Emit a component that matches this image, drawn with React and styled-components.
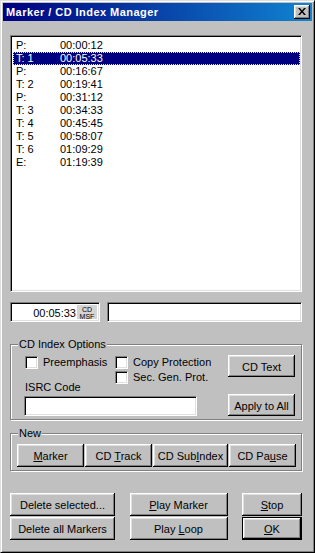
import styled, { createGlobalStyle } from "styled-components";

const GlobalStyle = createGlobalStyle`
  html, body {
    margin: 0;
    padding: 0;
    background: #c0c0c0;
  }
  body {
    font-family: "Liberation Sans", Arial, sans-serif;
    font-size: 11px;
    color: #000;
  }
  * {
    box-sizing: border-box;
  }
`;

const Window = styled.div`
  width: 315px;
  height: 553px;
  background: #c0c0c0;
  border: 1px solid;
  border-color: #dfdfdf #000 #000 #dfdfdf;
  box-shadow: inset 1px 1px #fff, inset -1px -1px #808080;
  padding: 2px;
  display: flex;
  flex-direction: column;
`;

const TitleBar = styled.div`
  height: 18px;
  flex: none;
  background: linear-gradient(to right, #000080, #1084d0);
  display: flex;
  align-items: center;
  justify-content: space-between;
  padding: 0 2px 0 3px;
`;

const Title = styled.span`
  color: #fff;
  font-weight: bold;
  font-size: 11px;
  letter-spacing: 0.45px;
`;

const CloseButton = styled.div`
  width: 16px;
  height: 14px;
  background: #c0c0c0;
  box-shadow: inset -1px -1px #000, inset 1px 1px #fff, inset -2px -2px #808080,
    inset 2px 2px #dfdfdf;
  display: flex;
  align-items: center;
  justify-content: center;
  padding-bottom: 1px;
`;

const Body = styled.div`
  flex: 1;
  display: flex;
  flex-direction: column;
  padding: 14px 10px 0 7px;
`;

const sunken = `
  border: 1px solid;
  border-color: #808080 #fff #fff #808080;
  box-shadow: inset 1px 1px #000, inset -1px -1px #dfdfdf;
`;

const ListBox = styled.div`
  ${sunken}
  height: 257px;
  background: #fff;
  padding: 3px 1px 1px 2px;
`;

const Row = styled.div`
  height: 13px;
  line-height: 11px;
  display: flex;
  padding-left: 2px;
  border: 1px solid transparent;
  background: ${(p) => (p.$selected ? "#000080" : "transparent")};
  color: ${(p) => (p.$selected ? "#fff" : "#000")};
  ${(p) => p.$selected && "border: 1px dotted #ffff00;"}
`;

const TypeCell = styled.span`
  width: 44px;
`;

const DisplayRow = styled.div`
  display: flex;
  gap: 7px;
  margin-top: 10px;
`;

const TimeBox = styled.div`
  ${sunken}
  width: 90px;
  height: 20px;
  background: #fff;
  display: flex;
  padding: 2px;
`;

const TimeText = styled.span`
  flex: 1;
  text-align: right;
  line-height: 16px;
  padding-right: 1px;
`;

const TimeFormat = styled.span`
  width: 20px;
  background: #d4d4d4;
  font-size: 7px;
  line-height: 7px;
  text-align: center;
  padding-top: 1px;
  overflow: hidden;
`;

const InfoBox = styled.div`
  ${sunken}
  flex: 1;
  height: 20px;
  background: #fff;
`;

const Group = styled.div`
  position: relative;
  border: 1px solid #808080;
  box-shadow: 1px 1px 0 #fff, inset 1px 1px 0 #fff;
  margin-top: ${(p) => p.$top}px;
  padding: ${(p) => p.$pad};
  display: flex;
`;

const GroupLabel = styled.span`
  position: absolute;
  top: -7px;
  left: 7px;
  padding: 0 1px;
  background: #c0c0c0;
  line-height: 13px;
`;

const LeftPane = styled.div`
  flex: 1;
  display: flex;
  flex-direction: column;
  padding-top: 1px;
`;

const OptionsRow = styled.div`
  display: flex;
`;

const OptionCol = styled.div`
  width: ${(p) => p.$w}px;
  display: flex;
  flex-direction: column;
`;

const Check = styled.label`
  height: 15px;
  display: flex;
  align-items: flex-start;
  gap: 5px;
  line-height: 13px;
  white-space: nowrap;
`;

const CheckBox = styled.span`
  ${sunken}
  width: 13px;
  height: 13px;
  flex: none;
  background: #fff;
`;

const FieldLabel = styled.span`
  margin-top: 10px;
  line-height: 12px;
`;

const TextInput = styled.div`
  ${sunken}
  width: 173px;
  height: 20px;
  margin: 3px 0 0 -1px;
  background: #fff;
`;

const RightPane = styled.div`
  width: 67px;
  display: flex;
  flex-direction: column;
  justify-content: space-between;
`;

const Button = styled.div`
  width: ${(p) => (p.$w ? `${p.$w}px` : "100%")};
  height: ${(p) => p.$h || 23}px;
  background: #c0c0c0;
  display: flex;
  align-items: center;
  justify-content: center;
  white-space: nowrap;
  box-shadow: inset -1px -1px #000, inset 1px 1px #fff, inset -2px -2px #808080,
    inset 2px 2px #dfdfdf;
  ${(p) => p.$default && "border: 1px solid #000;"}
  padding-top: 1px;
`;

const NewRow = styled.div`
  display: flex;
  gap: 1px;
`;

const Footer = styled.div`
  display: flex;
  justify-content: space-between;
  margin-top: 22px;
`;

const ButtonColumn = styled.div`
  width: ${(p) => p.$w}px;
  display: flex;
  flex-direction: column;
  gap: 1px;
`;

const markers = [
  ["P:", "00:00:12"],
  ["T: 1", "00:05:33", true],
  ["P:", "00:16:67"],
  ["T: 2", "00:19:41"],
  ["P:", "00:31:12"],
  ["T: 3", "00:34:33"],
  ["T: 4", "00:45:45"],
  ["T: 5", "00:58:07"],
  ["T: 6", "01:09:29"],
  ["E:", "01:19:39"],
];

export default function App() {
  return (
    <>
      <GlobalStyle />
      <Window>
        <TitleBar>
          <Title>Marker / CD Index Manager</Title>
          <CloseButton>
            <svg width="8" height="7" viewBox="0 0 8 7">
              <path d="M0 0h2l2 2.5L6 0h2L5 3.5 8 7H6L4 4.5 2 7H0l3-3.5z" fill="#000" />
            </svg>
          </CloseButton>
        </TitleBar>
        <Body>
          <ListBox>
            {markers.map(([type, time, sel], i) => (
              <Row key={i} $selected={sel}>
                <TypeCell>{type}</TypeCell>
                <span>{time}</span>
              </Row>
            ))}
          </ListBox>

          <DisplayRow>
            <TimeBox>
              <TimeText>00:05:33</TimeText>
              <TimeFormat>
                CD
                <br />
                MSF
              </TimeFormat>
            </TimeBox>
            <InfoBox />
          </DisplayRow>

          <Group $top={22} $pad="10px 6px 3px 14px">
            <GroupLabel>CD Index Options</GroupLabel>
            <LeftPane>
              <OptionsRow>
                <OptionCol $w={90}>
                  <Check>
                    <CheckBox />
                    Preemphasis
                  </Check>
                  <FieldLabel>ISRC Code</FieldLabel>
                </OptionCol>
                <OptionCol $w={110}>
                  <Check>
                    <CheckBox />
                    Copy Protection
                  </Check>
                  <Check>
                    <CheckBox />
                    Sec. Gen. Prot.
                  </Check>
                </OptionCol>
              </OptionsRow>
              <TextInput />
            </LeftPane>
            <RightPane>
              <Button $h={22}>CD Text</Button>
              <Button $h={22}>Apply to All</Button>
            </RightPane>
          </Group>

          <Group $top={13} $pad="10px 6px 3px 6px">
            <GroupLabel>New</GroupLabel>
            <NewRow>
              <Button $w={67}>
                <span>
                  <u>M</u>arker
                </span>
              </Button>
              <Button $w={67}>
                <span>
                  CD <u>T</u>rack
                </span>
              </Button>
              <Button $w={75}>
                <span>
                  CD Sub<u>I</u>ndex
                </span>
              </Button>
              <Button $w={67}>
                <span>
                  CD Pa<u>u</u>se
                </span>
              </Button>
            </NewRow>
          </Group>

          <Footer>
            <ButtonColumn $w={105}>
              <Button>Delete selected...</Button>
              <Button>Delete all Markers</Button>
            </ButtonColumn>
            <ButtonColumn $w={98}>
              <Button>
                <span>
                  <u>P</u>lay Marker
                </span>
              </Button>
              <Button>
                <span>
                  Play <u>L</u>oop
                </span>
              </Button>
            </ButtonColumn>
            <ButtonColumn $w={60}>
              <Button>
                <span>
                  <u>S</u>top
                </span>
              </Button>
              <Button $default>
                <span>
                  <u>O</u>K
                </span>
              </Button>
            </ButtonColumn>
          </Footer>
        </Body>
      </Window>
    </>
  );
}
